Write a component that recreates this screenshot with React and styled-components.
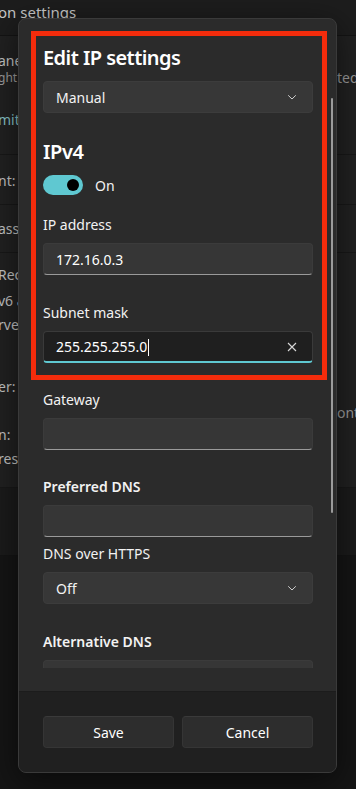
import React from 'react';
import styled, { createGlobalStyle } from 'styled-components';

const GlobalStyle = createGlobalStyle`
    html, body {
        margin: 0;
        padding: 0;
        background: #151515;
        width: 356px;
        height: 789px;
        overflow: hidden;
    }
    body {
        font-family: "Segoe UI", "Noto Sans", "Open Sans", sans-serif;
        color: #fff;
    }
`;

const Chevron = () => (
    <svg width="12" height="12" viewBox="0 0 12 12">
        <path d="M2.2 4.3 L6 8 L9.8 4.3" fill="none" stroke="#cfcfcf" strokeWidth="1" />
    </svg>
);

const Cross = () => (
    <svg width="12" height="12" viewBox="0 0 12 12">
        <path d="M2 2 L10 10 M10 2 L2 10" fill="none" stroke="#d8d8d8" strokeWidth="1.1" />
    </svg>
);

export default function App() {
    return (
        <Screen>
            <GlobalStyle />
            <Page>
                <PageHeader>on settings</PageHeader>
                <Card $h={119}>
                    <BgText $top={15}>ane</BgText>
                    <BgRow $top={-3}>
                        <BgText $small>ght</BgText>
                        <BgText $right>ted</BgText>
                    </BgRow>
                    <BgText $link $top={22}>mit</BgText>
                </Card>
                <Card $h={50}>
                    <BgText $top={16}>nt:</BgText>
                </Card>
                <Card $h={48}>
                    <BgText $top={14}>assi</BgText>
                </Card>
                <Card $h={235}>
                    <BgText $top={12}>Rec</BgText>
                    <BgText $top={6}>v6 a</BgText>
                    <BgText $top={4}>rve</BgText>
                    <BgText $top={42}>er:</BgText>
                    <BgRow $top={6}>
                        <span />
                        <BgText $right>ont</BgText>
                    </BgRow>
                    <BgText $top={2}>n:</BgText>
                    <BgText $top={4}>res</BgText>
                </Card>
                <Band />
            </Page>

            <Dialog>
                <Body>
                    <Title>Edit IP settings</Title>
                    <Select $top={9}>
                        <span>Manual</span>
                        <Chevron />
                    </Select>

                    <Heading>IPv4</Heading>
                    <ToggleRow>
                        <Toggle>
                            <Knob />
                        </Toggle>
                        <span>On</span>
                    </ToggleRow>

                    <Label $top={20}>IP address</Label>
                    <Input>172.16.0.3</Input>

                    <Label $top={28}>Subnet mask</Label>
                    <Input $focused>
                        <span>
                            255.255.255.0<Caret />
                        </span>
                        <Cross />
                    </Input>

                    <Label $top={27}>Gateway</Label>
                    <Input />

                    <Label $top={27} $bold>Preferred DNS</Label>
                    <Input />

                    <Label $top={7}>DNS over HTTPS</Label>
                    <Select $top={8}>
                        <span>Off</span>
                        <Chevron />
                    </Select>

                    <Label $top={28} $bold>Alternative DNS</Label>
                    <Input />
                </Body>
                <ScrollBar />
                <Footer>
                    <Button>Save</Button>
                    <Button>Cancel</Button>
                </Footer>
                <Highlight />
            </Dialog>
        </Screen>
    );
}

const Screen = styled.div`
    position: relative;
    width: 356px;
    height: 789px;
    overflow: hidden;
    background: #151515;
`;

const Page = styled.div`
    display: flex;
    flex-direction: column;
`;

const PageHeader = styled.div`
    height: 36px;
    box-sizing: border-box;
    padding: 1px 0 0 0;
    margin-left: -2px;
    font-size: 15px;
    line-height: 22px;
    color: #c9c9c9;
    background: #1d1d1d;
    border-bottom: 1px solid #141414;
`;

const Card = styled.div`
    height: ${p => p.$h}px;
    box-sizing: border-box;
    display: flex;
    flex-direction: column;
    background: #212121;
    border-bottom: 1px solid #181818;
`;

const Band = styled.div`
    height: 67px;
    background: #1b1b1b;
    border-bottom: 1px solid #141414;
`;

const BgRow = styled.div`
    display: flex;
    justify-content: space-between;
    align-items: center;
    margin-top: ${p => p.$top || 0}px;
`;

const BgText = styled.span`
    margin-top: ${p => p.$top || 0}px;
    margin-left: -2px;
    font-size: ${p => (p.$small ? 12 : 14)}px;
    line-height: ${p => (p.$small ? 16 : 20)}px;
    color: ${p => (p.$link ? '#86c3c8' : p.$small ? '#9d9d9d' : '#c4c4c4')};
    white-space: nowrap;
    ${p => p.$right && `
        width: 19px;
        overflow: hidden;
        margin-left: 0;
        color: #9a9a9a;
    `}
`;

const Dialog = styled.div`
    position: absolute;
    left: 18px;
    top: 18px;
    width: 319px;
    height: 755px;
    box-sizing: border-box;
    display: flex;
    flex-direction: column;
    background: #2b2b2b;
    border: 1px solid #3a3a3a;
    border-radius: 8px;
    overflow: hidden;
    box-shadow: 0 8px 32px rgba(0, 0, 0, 0.55);
`;

const Body = styled.div`
    height: 649px;
    flex: none;
    box-sizing: border-box;
    padding: 25px 23px 0 24px;
    display: flex;
    flex-direction: column;
    overflow: hidden;
`;

const Title = styled.div`
    font-size: 20px;
    line-height: 28px;
    font-weight: 600;
    color: #fff;
    letter-spacing: -0.55px;
`;

const Heading = styled.div`
    margin-top: 25px;
    font-size: 20px;
    line-height: 28px;
    font-weight: 600;
    color: #fff;
    letter-spacing: -0.4px;
`;

const Select = styled.div`
    margin-top: ${p => p.$top}px;
    height: 32px;
    flex: none;
    box-sizing: border-box;
    display: flex;
    align-items: center;
    justify-content: space-between;
    padding: 0 14px 0 12px;
    background: #373737;
    border: 1px solid #3c3c3c;
    border-radius: 4px;
    font-size: 14px;
    color: #f2f2f2;
`;

const ToggleRow = styled.div`
    margin-top: 9px;
    display: flex;
    align-items: center;
    gap: 12px;
    font-size: 14px;
    color: #f2f2f2;
`;

const Toggle = styled.div`
    width: 40px;
    height: 20px;
    box-sizing: border-box;
    border-radius: 10px;
    background: #5fc8d1;
    display: flex;
    align-items: center;
    justify-content: flex-end;
    padding-right: 4px;
`;

const Knob = styled.div`
    width: 12px;
    height: 12px;
    border-radius: 50%;
    background: #000;
`;

const Label = styled.div`
    margin-top: ${p => p.$top}px;
    font-size: 14px;
    line-height: 20px;
    font-weight: ${p => (p.$bold ? 600 : 400)};
    color: #f2f2f2;
`;

const Input = styled.div`
    margin-top: 8px;
    height: 32px;
    flex: none;
    box-sizing: border-box;
    display: flex;
    align-items: center;
    justify-content: space-between;
    padding: 0 14px 0 12px;
    border-radius: 4px;
    font-size: 14px;
    color: #fff;
    background: ${p => (p.$focused ? '#1f1f1f' : '#363636')};
    border: 1px solid ${p => (p.$focused ? '#3a3a3a' : '#3b3b3b')};
    border-bottom: ${p => (p.$focused ? '2px solid #5fc8d1' : '1px solid #9a9a9a')};
`;

const Caret = styled.span`
    display: inline-block;
    width: 1px;
    height: 17px;
    margin-left: 1px;
    vertical-align: -4px;
    background: #fff;
`;

const ScrollBar = styled.div`
    position: absolute;
    right: 3px;
    top: 79px;
    width: 2px;
    height: 415px;
    border-radius: 1px;
    background: #9b9b9b;
`;

const Footer = styled.div`
    margin-top: auto;
    height: 81px;
    box-sizing: border-box;
    padding: 24px 23px 0 24px;
    display: grid;
    grid-template-columns: 1fr 1fr;
    column-gap: 8px;
    align-items: start;
    background: #202020;
    border-top: 1px solid #1c1c1c;
`;

const Button = styled.button`
    height: 32px;
    border: 1px solid #353535;
    border-top-color: #3a3a3a;
    border-radius: 4px;
    background: #2d2d2d;
    color: #fff;
    font-family: inherit;
    font-size: 14px;
    cursor: pointer;
`;

const Highlight = styled.div`
    position: absolute;
    left: 12px;
    top: 12px;
    width: 296px;
    height: 349px;
    box-sizing: border-box;
    border: 5px solid #f42c0c;
    pointer-events: none;
`;
